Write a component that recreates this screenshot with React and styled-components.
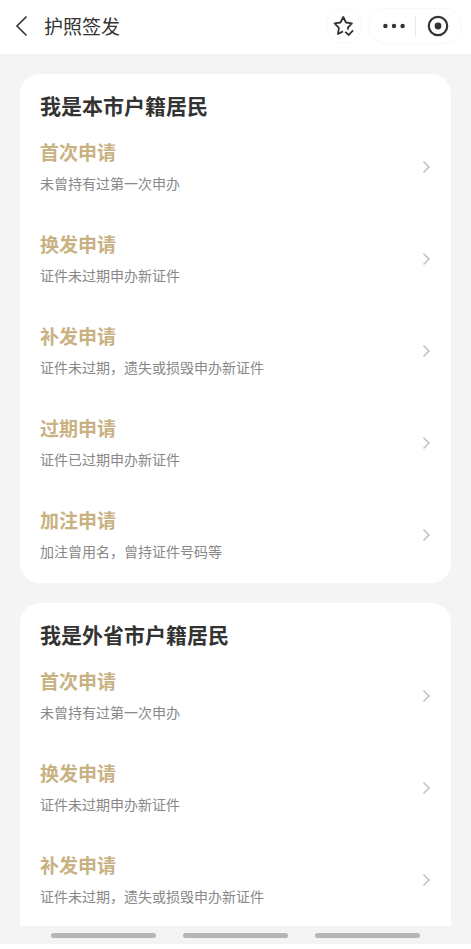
import React from 'react'
import styled, { createGlobalStyle } from 'styled-components'

const groups = [
  {
    title: '我是本市户籍居民',
    items: [
      { name: '首次申请', text: '未曾持有过第一次申办' },
      { name: '换发申请', text: '证件未过期申办新证件' },
      { name: '补发申请', text: '证件未过期，遗失或损毁申办新证件' },
      { name: '过期申请', text: '证件已过期申办新证件' },
      { name: '加注申请', text: '加注曾用名，曾持证件号码等' },
    ],
  },
  {
    title: '我是外省市户籍居民',
    continues: true,
    items: [
      { name: '首次申请', text: '未曾持有过第一次申办' },
      { name: '换发申请', text: '证件未过期申办新证件' },
      { name: '补发申请', text: '证件未过期，遗失或损毁申办新证件' },
    ],
  },
]

const App = () => (
  <Page>
    <GlobalStyle />
    <Header>
      <BackButton type="button" aria-label="返回">
        <svg width="14" height="22" viewBox="0 0 14 22">
          <path d="M12.500 1.500 3 11l9.500 9.500" />
        </svg>
      </BackButton>
      <PageTitle>护照签发</PageTitle>
      <RoundButton type="button" aria-label="收藏">
        <svg width="24" height="24" viewBox="0 0 24 24">
          <path d="M11 17.400 6 20l.900-6.100L2.600 9.400l5.900-.900L11.300 3l2.700 5.500 5.900.900-4.100 4.200.300 2" />
          <path d="m13.200 17.800 3.600 3.200 4.200-4.600" />
        </svg>
      </RoundButton>
      <Capsule>
        <CapsuleButton type="button" aria-label="更多">
          <svg width="28" height="24" viewBox="0 0 28 24">
            <circle cx="7.400" cy="12" r="2.200" />
            <circle cx="16" cy="12" r="2.200" />
            <circle cx="24.600" cy="12" r="2.200" />
          </svg>
        </CapsuleButton>
        <Divider />
        <CapsuleButton type="button" aria-label="关闭">
          <svg width="24" height="24" viewBox="0 0 24 24">
            <circle className="ring" cx="12" cy="12" r="9.200" />
            <circle cx="12" cy="12" r="3.400" />
          </svg>
        </CapsuleButton>
      </Capsule>
    </Header>
    <Main>
      {groups.map(group => (
        <Group key={group.title} group={group} />
      ))}
    </Main>
    <NavBar>
      <NavHandle />
      <NavHandle />
      <NavHandle />
    </NavBar>
  </Page>
)

export default App

const Group = ({ group }) => (
  <Card $continues={group.continues}>
    <CardTitle>{group.title}</CardTitle>
    <List>
      {group.items.map(item => (
        <li key={item.name}>
          <Row href="#">
            <RowBody>
              <RowName>{item.name}</RowName>
              <RowText>{item.text}</RowText>
            </RowBody>
            <Chevron width="9" height="14" viewBox="0 0 9 14">
              <path d="m1.500 1.500 5.500 5.500-5.500 5.500" />
            </Chevron>
          </Row>
        </li>
      ))}
    </List>
  </Card>
)

const GlobalStyle = createGlobalStyle`
  * {
    box-sizing: border-box;
  }
  body {
    margin: 0;
    background: #ffffff;
    color: #333333;
    font-family: 'Noto Sans CJK SC', sans-serif;
  }
  button {
    padding: 0;
    border: 0;
    background: none;
    cursor: pointer;
  }
`

const Page = styled.div`
  display: flex;
  flex-direction: column;
  min-height: 100vh;
  border-bottom: 5px solid #ffffff;
  background: #f4f4f4;
`

const Header = styled.header`
  display: flex;
  align-items: center;
  height: 54px;
  padding: 0 9px 2px 14px;
  background: #ffffff;
`

const BackButton = styled.button`
  display: flex;
  margin-right: 16px;
  svg {
    fill: none;
    stroke: #333333;
    stroke-width: 1.6;
  }
`

const PageTitle = styled.h1`
  flex: 1;
  margin: 0;
  font-size: 19px;
  font-weight: 400;
  line-height: 28px;
`

const RoundButton = styled.button`
  display: flex;
  align-items: center;
  justify-content: center;
  width: 36px;
  height: 36px;
  margin-right: 6px;
  border: 1px solid #f8f8f8;
  border-radius: 50%;
  svg {
    fill: none;
    stroke: #333333;
    stroke-width: 1.8;
    stroke-linejoin: round;
  }
`

const Capsule = styled.div`
  display: flex;
  align-items: center;
  width: 94px;
  height: 36px;
  border: 1px solid #f8f8f8;
  border-radius: 18px;
`

const CapsuleButton = styled.button`
  display: flex;
  flex: 1;
  justify-content: center;
  svg {
    fill: #333333;
  }
  .ring {
    fill: none;
    stroke: #333333;
    stroke-width: 2.2;
  }
`

const Divider = styled.span`
  width: 1px;
  height: 20px;
  background: #e8e8e8;
`

const Main = styled.main`
  display: flex;
  flex: 1;
  flex-direction: column;
  gap: 20px;
  padding: 20px 20px 0;
`

const Card = styled.section`
  padding: 16px 20px ${props => (props.$continues ? '0' : '2px')};
  border-radius: ${props => (props.$continues ? '20px 20px 0 0' : '20px')};
  background: #ffffff;
`

const CardTitle = styled.h2`
  margin: 0;
  font-size: 21px;
  font-weight: 700;
  line-height: 31px;
`

const List = styled.ul`
  margin: 0;
  padding: 0;
  list-style: none;
`

const Row = styled.a`
  display: flex;
  align-items: center;
  justify-content: space-between;
  height: 92px;
  text-decoration: none;
`

const RowBody = styled.div`
  padding-bottom: 4px;
`

const RowName = styled.h3`
  margin: 0 0 7px;
  color: #c9b282;
  font-size: 19px;
  font-weight: 700;
  line-height: 28px;
`

const RowText = styled.p`
  margin: 0;
  color: #888888;
  font-size: 14px;
  line-height: 20px;
`

const Chevron = styled.svg`
  flex: none;
  fill: none;
  stroke: #c4c4c4;
  stroke-width: 1.6;
`

const NavBar = styled.footer`
  display: flex;
  gap: 27px;
  padding: 6px 51px;
`

const NavHandle = styled.span`
  flex: 1;
  height: 5px;
  border-radius: 3px;
  background: #b5b5b5;
`
